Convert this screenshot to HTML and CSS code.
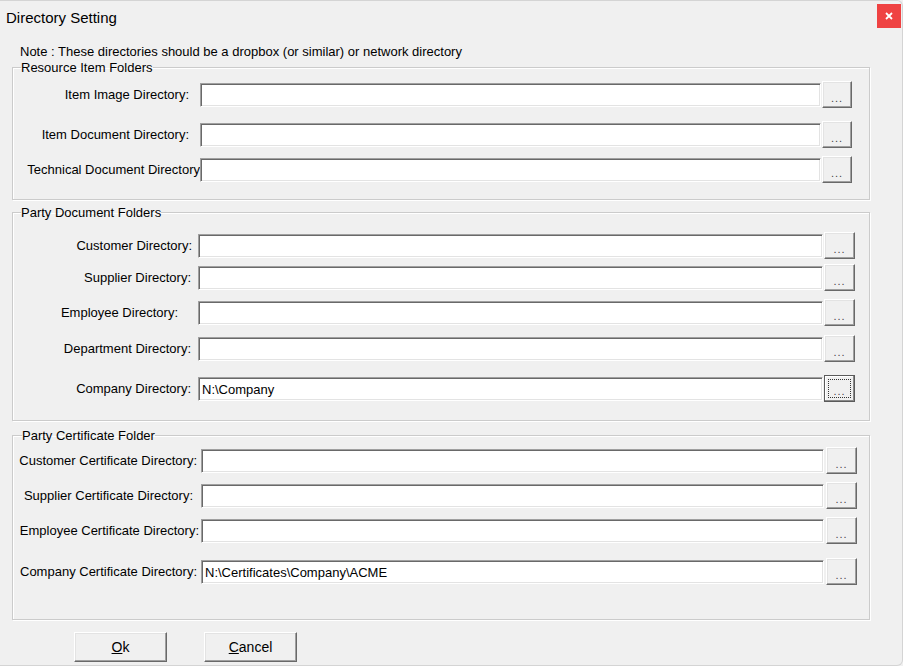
FILE: index.html
```html
<!DOCTYPE html>
<html>
<head>
<meta charset="utf-8">
<title>Directory Setting</title>
<link rel="stylesheet" href="styles.css">
</head>
<body>
<div class="window">
  <div class="titlebar">
    <span class="title">Directory Setting</span>
    <span class="close">
      <svg width="10" height="10" viewBox="0 0 10 10"><path d="M2 2 L8 8 M8 2 L2 8" stroke="#fff" stroke-width="1.8" fill="none"/></svg>
    </span>
  </div>
  <div class="content">
    <div class="note">Note : These directories should be a dropbox (or similar) or network directory</div>

    <fieldset class="group g1">
      <legend>Resource Item Folders</legend>
      <div class="row"><label class="lbl p11">Item Image Directory:</label><div class="field"></div><button class="dots">...</button></div>
      <div class="row m13"><label class="lbl p11">Item Document Directory:</label><div class="field"></div><button class="dots">...</button></div>
      <div class="row m8"><label class="lbl p0">Technical Document Directory</label><div class="field"></div><button class="dots">...</button></div>
    </fieldset>

    <fieldset class="group g2">
      <legend>Party Document Folders</legend>
      <div class="row"><label class="lbl p6">Customer Directory:</label><div class="field"></div><button class="dots">...</button></div>
      <div class="row m5"><label class="lbl p7">Supplier Directory:</label><div class="field"></div><button class="dots">...</button></div>
      <div class="row m8"><label class="lbl p20">Employee Directory:</label><div class="field"></div><button class="dots">...</button></div>
      <div class="row m9"><label class="lbl p7">Department Directory:</label><div class="field"></div><button class="dots">...</button></div>
      <div class="row m13"><label class="lbl p7">Company Directory:</label><div class="field">N:\Company</div><button class="dots focus"><span class="ring">...</span></button></div>
    </fieldset>

    <fieldset class="group g3">
      <legend>Party Certificate Folder</legend>
      <div class="row"><label class="lbl p4">Customer Certificate Directory:</label><div class="field"></div><button class="dots">...</button></div>
      <div class="row m8"><label class="lbl p8">Supplier Certificate Directory:</label><div class="field"></div><button class="dots">...</button></div>
      <div class="row m8"><label class="lbl p2">Employee Certificate Directory:</label><div class="field"></div><button class="dots">...</button></div>
      <div class="row m14"><label class="lbl p4">Company Certificate Directory:</label><div class="field">N:\Certificates\Company\ACME</div><button class="dots">...</button></div>
    </fieldset>

    <div class="actions">
      <button class="btn"><u>O</u>k</button>
      <button class="btn"><u>C</u>ancel</button>
    </div>
  </div>
</div>
</body>
</html>
```

FILE: styles.css
```css
html, body {
  margin: 0;
  padding: 0;
  background: #f0f0f0;
}
body {
  font-family: "Liberation Sans", Arial, sans-serif;
  font-size: 13px;
  color: #000;
}
.window {
  box-sizing: border-box;
  width: 903px;
  height: 666px;
  border: 1px solid #d4d4d4;
  border-left: none;
  border-radius: 0 6px 6px 0;
  background: #f0f0f0;
  overflow: hidden;
}
.titlebar {
  height: 32px;
  display: flex;
  align-items: flex-start;
  justify-content: space-between;
}
.title {
  font-size: 15px;
  line-height: 17px;
  margin: 8px 0 0 6px;
}
.close {
  width: 24px;
  height: 24px;
  margin: 3px 1px 0 0;
  background: #ef4242;
  display: flex;
  align-items: center;
  justify-content: center;
}
.close svg { display: block; }
.content {
  padding: 0 32px 0 12px;
}
.note {
  line-height: 15px;
  padding: 11px 0 0 8px;
}
.group {
  margin: 0;
  padding: 0;
  border: 1px solid #cbcbcb;
  box-shadow: inset 1px 1px 0 #fff, 1px 1px 0 #fff;
  min-width: 0;
}
.group legend {
  padding: 0;
  margin-left: 8px;
  line-height: 15px;
  font-size: 13px;
}
.g1 { margin-top: 1px; padding: 6px 0 16px 0; }
.g2 { margin-top: 5px; padding: 12px 0 18px 0; }
.g3 { margin-top: 7px; padding: 4px 0 34px 1px; }

.row {
  display: flex;
  align-items: center;
  height: 27px;
}
.m5 { margin-top: 5px; }
.m8 { margin-top: 8px; }
.m9 { margin-top: 9px; }
.m13 { margin-top: 13px; }
.m14 { margin-top: 14px; }

.lbl {
  box-sizing: border-box;
  text-align: right;
  white-space: nowrap;
  line-height: 15px;
}
.g1 .lbl { width: 187px; }
.g2 .lbl { width: 185px; }
.g3 .lbl { width: 187px; }
.p0 { padding-right: 0; }
.p2 { padding-right: 2px; }
.p4 { padding-right: 4px; }
.p6 { padding-right: 6px; }
.p7 { padding-right: 7px; }
.p8 { padding-right: 8px; }
.p11 { padding-right: 11px; }
.p20 { padding-right: 20px; }

.field {
  box-sizing: border-box;
  height: 24px;
  background: #fff;
  border: 1px solid;
  border-color: #a0a0a0 #fff #fff #a0a0a0;
  box-shadow: inset 1px 1px 0 #696969, inset -1px -1px 0 #e3e3e3;
  padding: 4px 0 0 3px;
  line-height: 15px;
  white-space: nowrap;
  overflow: hidden;
}
.g1 .field { width: 621px; }
.g2 .field { width: 625px; }
.g3 .field { width: 623px; }

.dots {
  box-sizing: border-box;
  height: 27px;
  padding: 0 0 4px 0;
  font-family: "Liberation Sans", Arial, sans-serif;
  font-size: 11px;
  letter-spacing: 1px;
  line-height: 10px;
  color: #444;
  background: #f0f0f0;
  border: 1px solid;
  border-color: #fff #696969 #696969 #fff;
  box-shadow: inset -1px -1px 0 #a0a0a0, inset 1px 1px 0 #e3e3e3;
  display: flex;
  align-items: flex-end;
  justify-content: center;
}
.g1 .dots { width: 30px; margin-left: 1px; }
.g2 .dots { width: 31px; margin-left: 1px; }
.g3 .dots { width: 31px; margin-left: 2px; }
.dots.focus {
  border-color: #5a5a5a;
  box-shadow: inset -1px -1px 0 #8a8a8a, inset 1px 1px 0 #fff;
  padding: 3px;
  align-items: stretch;
}
.ring {
  flex: 1;
  border: 1px dotted #333;
  display: flex;
  align-items: flex-end;
  justify-content: center;
  padding-bottom: 1px;
}

.actions {
  display: flex;
  gap: 37px;
  margin: 12px 0 0 62px;
}
.btn {
  box-sizing: border-box;
  width: 93px;
  height: 30px;
  padding: 0;
  font-family: "Liberation Sans", Arial, sans-serif;
  font-size: 14px;
  color: #000;
  background: #f0f0f0;
  border: 1px solid;
  border-color: #fff #696969 #696969 #fff;
  box-shadow: inset -1px -1px 0 #a0a0a0, inset 1px 1px 0 #e3e3e3;
}
```
